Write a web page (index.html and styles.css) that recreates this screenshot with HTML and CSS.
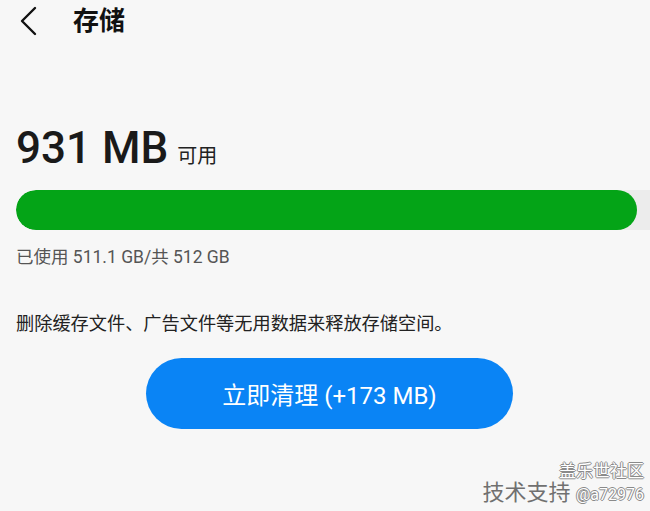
FILE: index.html
```html
<!DOCTYPE html>
<html lang="zh-CN">
<head>
    <meta charset="UTF-8">
    <meta name="viewport" content="width=device-width, initial-scale=1.0">
    <title>存储</title>
    <link rel="stylesheet" href="styles.css">
</head>
<body>
    <div class="tela">
        <header class="topo">
            <svg class="voltar" width="20" height="30" viewBox="0 0 20 30">
                <path d="M17 2 L4 15 L17 28" fill="none" stroke="#111" stroke-width="2.4" stroke-linecap="round" stroke-linejoin="round"/>
            </svg>
            <h1>存储</h1>
        </header>

        <section class="armazenamento">
            <p class="livre"><span class="valor">931 MB</span><span class="rotulo">可用</span></p>
            <div class="barra">
                <div class="preenchimento" style="width: 97%"></div>
            </div>
            <p class="usado">已使用 511.1 GB/共 512 GB</p>
        </section>

        <p class="descricao">删除缓存文件、广告文件等无用数据来释放存储空间。</p>

        <div class="area-botao">
            <button class="limpar">立即清理 (+173 MB)</button>
        </div>

        <div class="marca">
            <span class="comunidade">盖乐世社区</span>
            <span class="suporte">技术支持 <span class="usuario">@a72976</span></span>
        </div>
    </div>
</body>
</html>
```

FILE: styles.css
```css
* {
    margin: 0;
    padding: 0;
    box-sizing: border-box;
}
body {
    background-color: #f7f7f7;
    font-family: Roboto, "Noto Sans CJK SC", sans-serif;
    color: #111;
    width: 650px;
    height: 511px;
    overflow: hidden;
}
.tela {
    position: relative;
    height: 511px;
    padding: 0 16px;
}
.topo {
    display: flex;
    align-items: center;
    height: 42px;
}
.voltar {
    margin-left: 2px;
}
.topo h1 {
    font-size: 26px;
    font-weight: 700;
    margin-left: 35px;
    line-height: 42px;
}
.armazenamento {
    padding-top: 80px;
}
.livre {
    display: flex;
    align-items: baseline;
    line-height: 52px;
}
.valor {
    font-size: 44px;
    font-weight: 500;
    color: #1a1a1a;
}
.rotulo {
    font-size: 20px;
    margin-left: 9px;
    color: #222;
}
.barra {
    margin-top: 8px;
    height: 40px;
    width: 640px;
    background-color: #ececec;
    border-radius: 20px 0 0 20px;
    overflow: hidden;
}
.preenchimento {
    height: 100%;
    background-color: #04a417;
    border-radius: 20px;
}
.usado {
    margin-top: 16px;
    font-size: 17.5px;
    color: #555;
    line-height: 22px;
}
.descricao {
    margin-top: 44px;
    font-size: 18.2px;
    color: #222;
    line-height: 24px;
}
.area-botao {
    margin-top: 22px;
    padding-left: 130px;
}
.limpar {
    width: 367px;
    height: 71px;
    border: none;
    border-radius: 36px;
    background-color: #0a84f5;
    color: #fff;
    font-family: Roboto, "Noto Sans CJK SC", sans-serif;
    font-size: 24px;
}
.marca {
    position: absolute;
    right: 6px;
    bottom: 6px;
    display: flex;
    flex-direction: column;
    align-items: flex-end;
    line-height: 1.1;
}
.comunidade,
.usuario {
    color: #fff;
    text-shadow: -1px 0 #8a8a8a, 1px 0 #8a8a8a, 0 -1px #8a8a8a, 0 1px #8a8a8a;
}
.comunidade {
    font-size: 17px;
}
.suporte {
    font-size: 22px;
    color: #707070;
}
.usuario {
    font-size: 16px;
}
```
